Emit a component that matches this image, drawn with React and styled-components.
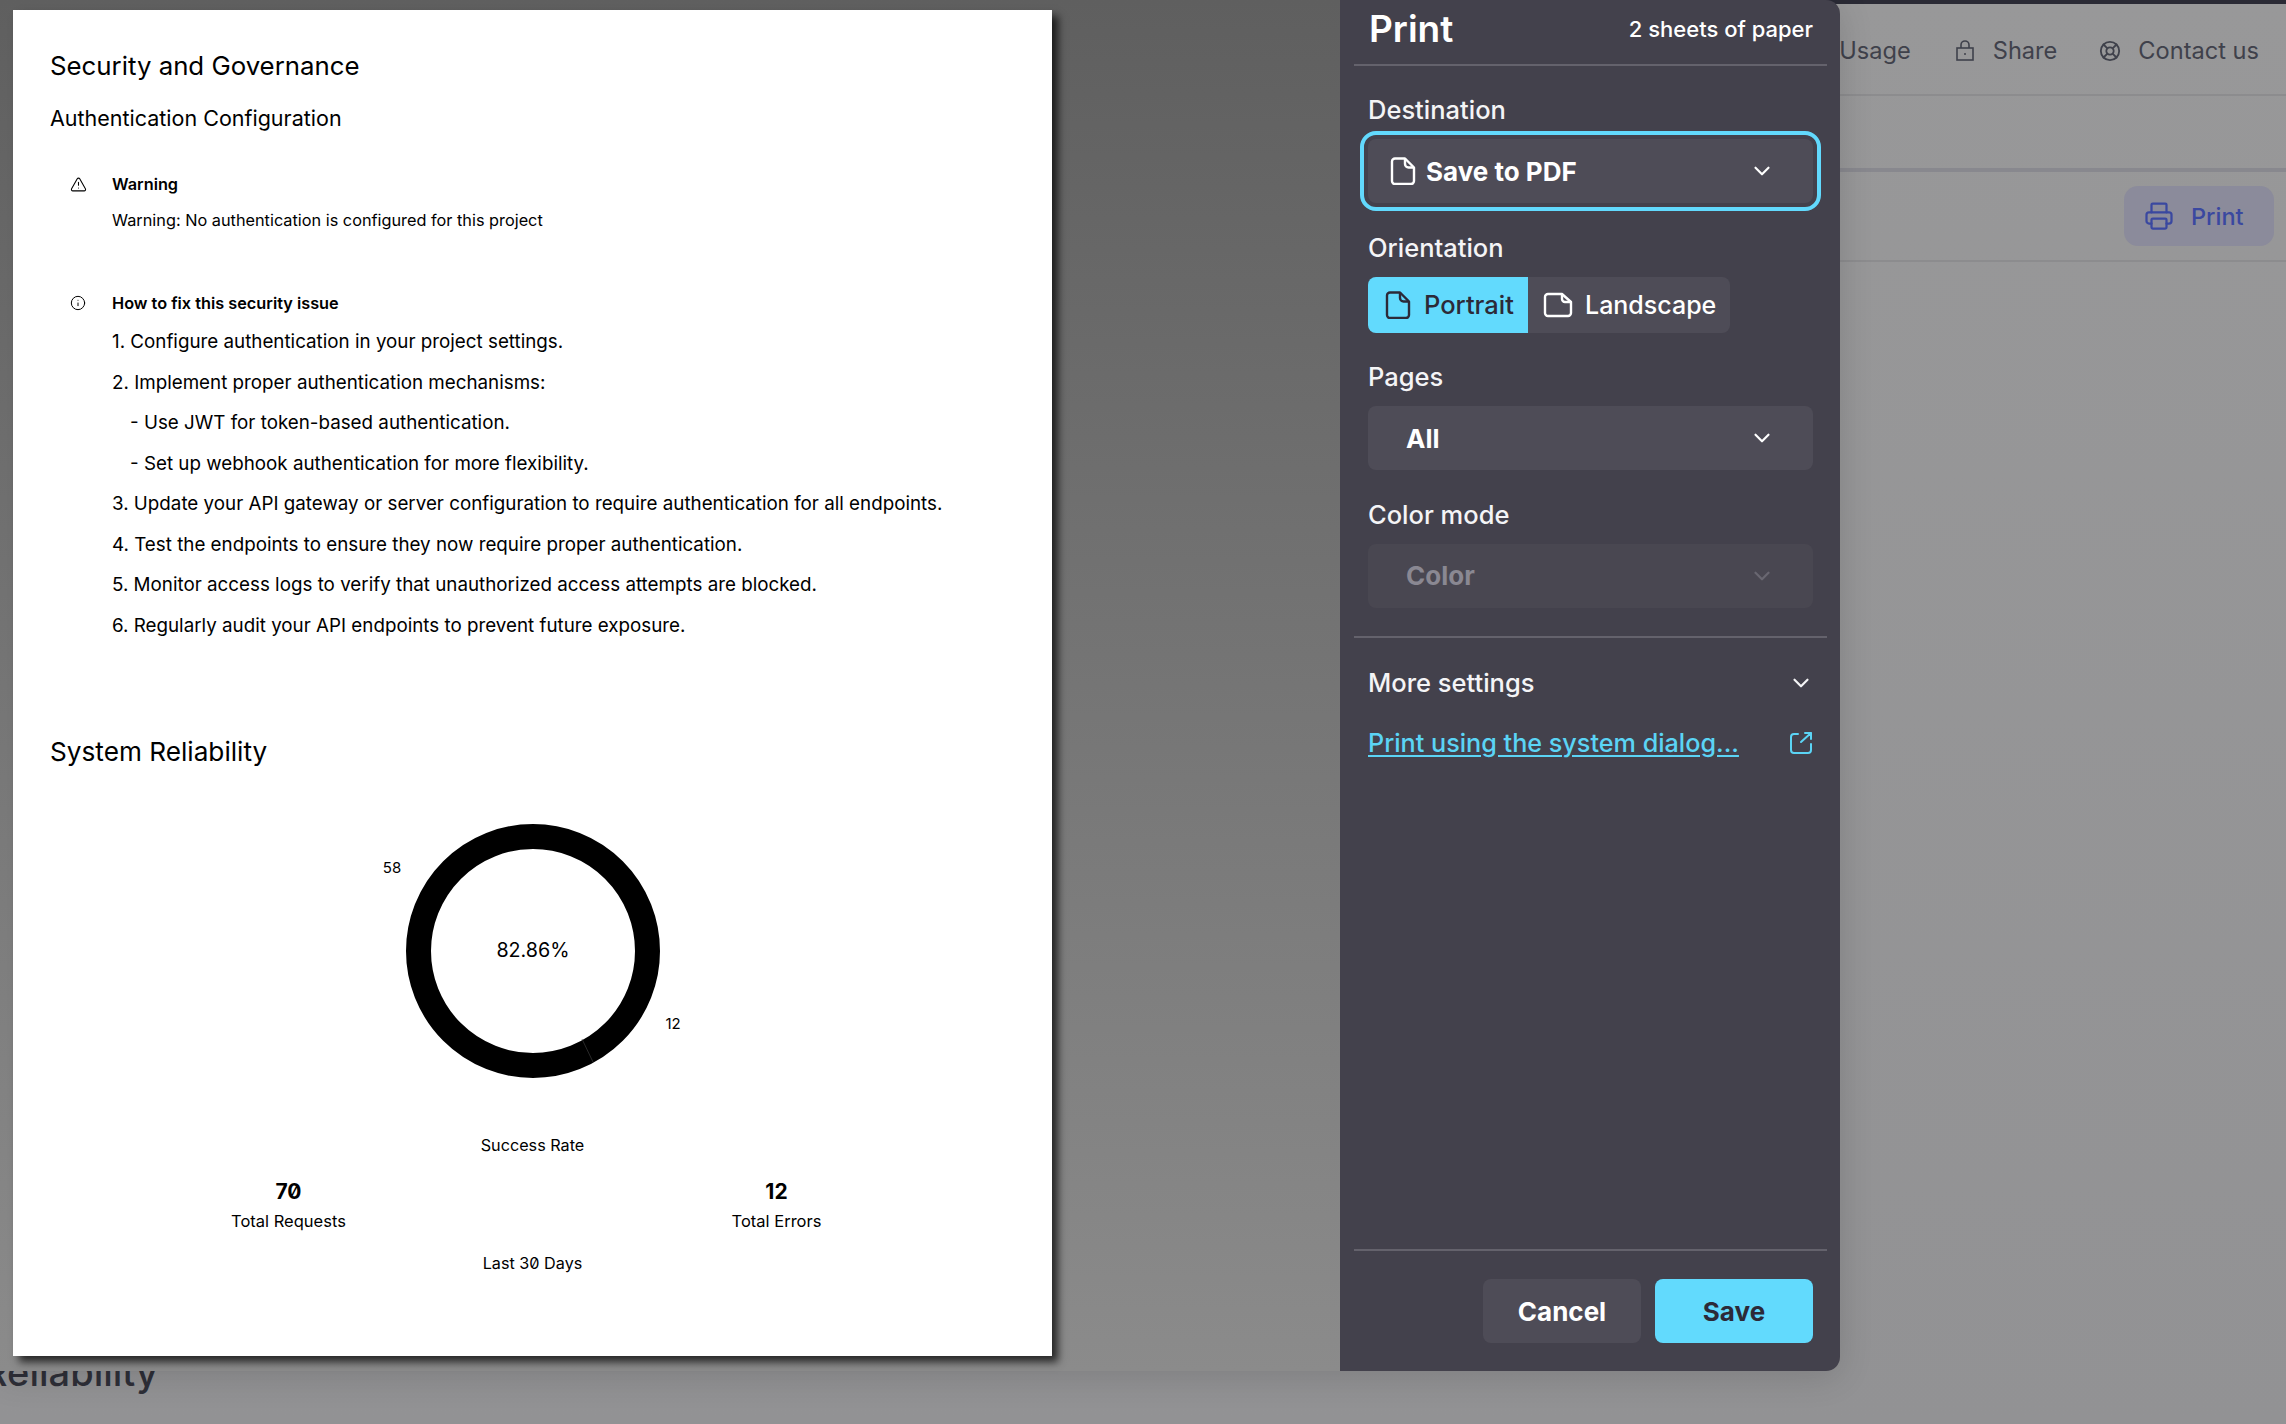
import React from "react";
import styled, { createGlobalStyle } from "styled-components";
import { ChevronDown, LifeBuoy, Printer, TriangleAlert, Info } from "lucide-react";

const Global = createGlobalStyle`
  html, body { margin: 0; padding: 0; overflow: hidden; }
  body { font-family: Inter, "Noto Sans", sans-serif; -webkit-font-smoothing: antialiased; }
`;

const Page = styled.div`
  position: relative; width: 2286px; height: 1424px; overflow: hidden;
  background: linear-gradient(180deg, #989899 0%, #929294 100%);
  display: flex; flex-direction: column; color: #3f414b;
`;
const TopBar = styled.div`height: 4px; background: #2a2a35; flex: none;`;
const Nav = styled.nav`
  height: 86px; flex: none; display: flex; justify-content: flex-end; align-items: center;
  padding: 4px 27px 0 0; border-bottom: 2px solid #8c8c8e; box-sizing: content-box;
`;
const NavItem = styled.span`
  display: inline-flex; align-items: center; gap: ${p => p.$gap || 20}px; font-size: 23.6px; line-height: 30px;
  margin-left: ${p => p.$ml || 0}px;
`;
const SubBar = styled.div`height: 72px; flex: none; border-bottom: 4px solid #88888e;`;
const ActionRow = styled.div`
  height: 88px; flex: none; display: flex; justify-content: flex-end; align-items: center;
  padding-right: 12px; border-bottom: 2px solid #8c8c8e;
`;
const GhostPrint = styled.button`
  width: 150px; height: 60px; border: 0; border-radius: 14px; background: #8b8b9b; color: #3a48a0;
  display: flex; align-items: center; justify-content: flex-start; gap: 17px; font: 500 23.5px Inter, sans-serif; padding: 0 0 0 20px;
`;
const UnderHeading = styled.h2`
  margin: auto 0 29px -17px; font-size: 38px; line-height: 46px; font-weight: 500; color: #2e2f38;
`;

const Overlay = styled.div`
  position: absolute; left: 0; top: 0; width: 1840px; height: 1371px; display: flex;
  box-shadow: 0 6px 34px rgba(0,0,0,.14);
  border-radius: 0 14px 14px 0;
`;
const Preview = styled.div`
  flex: 1; padding: 10px 0 0 13px; box-sizing: border-box;
  background: linear-gradient(180deg, #5f5f5f 0%, #8b8b8b 100%);
`;
const Paper = styled.div`
  width: 1039px; height: 1346px; background: #fff; color: #000; box-sizing: border-box;
  padding: 38px 37px 0; box-shadow: 6px 6px 8px rgba(0,0,0,.72);
  font-feature-settings: "zero" 1;
`;
const H1 = styled.h1`margin: 0; font-size: 25.8px; line-height: 36px; font-weight: 400;`;
const H2 = styled.h2`margin: 19px 0 0; font-size: 21.5px; line-height: 30px; font-weight: 400;`;
const SectionTitle = styled(H1)`margin-top: 96px; font-size: 26.2px;`;
const Alert = styled.section`
  display: grid; grid-template-columns: 42px 1fr; padding-left: 20px; margin-top: ${p => p.$mt}px;
`;
const AlertIcon = styled.div`height: 24px; display: flex; align-items: center;`;
const AlertTitle = styled.div`font-size: 16.3px; line-height: 24px; font-weight: 600;`;
const AlertBody = styled.div`font-size: 16.3px; line-height: 24px; margin-top: 12px;`;
const Steps = styled.ol`
  list-style: none; margin: 15px 0 0; padding: 0; display: flex; flex-direction: column; gap: 16.5px;
`;
const Step = styled.li`font-size: 18.8px; line-height: 24px; padding-left: ${p => p.$indent ? 18 : 0}px; white-space: nowrap;`;
const ChartWrap = styled.div`display: flex; justify-content: center; margin-top: 31px;`;
const ChartLabel = styled.div`text-align: center; font-size: 16.2px; line-height: 22px; margin-top: ${p => p.$mt}px;`;
const Stats = styled.div`display: grid; grid-template-columns: 488px 488px; justify-content: center; margin-top: 21.5px;`;
const Stat = styled.div`text-align: center;`;
const StatValue = styled.div`font-size: 21px; line-height: 28px; font-weight: 700;`;
const StatName = styled.div`font-size: 16.5px; line-height: 20px; margin-top: 5px;`;

const Panel = styled.aside`
  width: 500px; flex: none; box-sizing: border-box; background: #43414c; color: #fff;
  border-radius: 0 14px 14px 0; padding: 0 13px 0 14px; display: flex; flex-direction: column;
`;
const Header = styled.header`
  height: 66px; flex: none; border-bottom: 2px solid #64626c; display: flex; align-items: center;
  justify-content: space-between; padding: 0 14px 6px 15px; box-sizing: border-box;
`;
const Title = styled.h1`margin: 0; font-size: 37px; line-height: 44px; font-weight: 600;`;
const Sheets = styled.span`font-size: 22px; line-height: 28px; font-weight: 500;`;
const Settings = styled.div`display: flex; flex-direction: column; gap: 29.5px; padding: 29px 14px 28.5px; border-bottom: 2px solid #64626c;`;
const Field = styled.div`display: flex; flex-direction: column; gap: 14px;`;
const Label = styled.label`font-size: 25.5px; line-height: 30px; font-weight: 500; color: #f4f4f6;`;
const Select = styled.div`
  height: 64px; box-sizing: border-box; border-radius: 8px; display: flex; align-items: center;
  background: ${p => p.$disabled ? "#494751" : "#4e4c57"}; color: ${p => p.$disabled ? "#8a8892" : "#fff"};
  padding: 0 38px 0 ${p => p.$icon ? 22 : 38}px; gap: 10px; font-size: 26px; font-weight: 700;
  ${p => p.$focus && "outline: 4px solid #62d9fd; outline-offset: 4px;"}
  & > span { flex: 1; }
`;
const Segments = styled.div`display: flex; width: 362px; height: 56px; border-radius: 8px; overflow: hidden; background: #4e4c57;`;
const Segment = styled.div`
  display: flex; align-items: center; font-size: ${p => p.$fs}px; font-weight: 500; box-sizing: border-box;
  width: ${p => p.$w}px; padding-left: ${p => p.$pl}px; gap: ${p => p.$gap}px;
  background: ${p => p.$active ? "#62dafd" : "transparent"}; color: ${p => p.$active ? "#2c2a38" : "#fff"};
`;
const More = styled.div`
  display: flex; align-items: center; justify-content: space-between; padding: 29.5px 13px 0 14px;
  font-size: 25.5px; line-height: 30px; font-weight: 500; color: #f4f4f6;
`;
const LinkRow = styled.div`display: flex; align-items: center; justify-content: space-between; padding: 30px 14px 0 14px; color: #5bd4f5;`;
const SystemLink = styled.a`font-size: 25.2px; line-height: 30px; font-weight: 500; color: #5bd4f5; text-decoration: underline; text-underline-offset: 3px;`;
const Footer = styled.footer`
  margin-top: auto; border-top: 2px solid #64626c; padding: 28px 14px; display: flex; justify-content: flex-end; gap: 14px;
`;
const Action = styled.button`
  width: 158px; height: 64px; border: 0; border-radius: 8px; padding: 0; font: 700 26px Inter, sans-serif;
  background: ${p => p.$primary ? "#62dafd" : "#4e4c57"}; color: ${p => p.$primary ? "#2c2a38" : "#fff"};
`;

const DocIcon = ({ size = 28, landscape }) => landscape ? (
  <svg width="30" height="26" viewBox="0 0 30 26" fill="none" stroke="currentColor" strokeWidth="2.4" strokeLinejoin="round">
    <path d="M5 2h14l9 8v11a3 3 0 0 1-3 3H5a3 3 0 0 1-3-3V5a3 3 0 0 1 3-3z" />
    <path d="M19 2v5a3 3 0 0 0 3 3h6" />
  </svg>
) : (
  <svg width={size - 2} height={size} viewBox="0 0 26 28" fill="none" stroke="currentColor" strokeWidth="2.4" strokeLinejoin="round">
    <path d="M5 1.5h10l9 9V24a3 3 0 0 1-3 3H5a3 3 0 0 1-3-3V4.500a3 3 0 0 1 3-3z" />
    <path d="M15 1.500V7a3.500 3.500 0 0 0 3.500 3.500H24" />
  </svg>
);
const LockIcon = () => (
  <svg width="20" height="22" viewBox="0 0 20 22" fill="none" stroke="currentColor" strokeWidth="1.6">
    <rect x="2" y="8" width="16" height="12" />
    <path d="M6 8V5a4 4 0 0 1 8 0v3" />
    <circle cx="10" cy="14" r="1" fill="currentColor" stroke="none" />
  </svg>
);
const OpenIcon = () => (
  <svg width="24" height="24" viewBox="0 0 24 24" fill="none" stroke="currentColor" strokeWidth="2" strokeLinejoin="round" strokeLinecap="round">
    <path d="M9 3H5a3 3 0 0 0-3 3v13a3 3 0 0 0 3 3h14a3 3 0 0 0 3-3v-6" />
    <path d="M12 11 22 2M16 2h6v6" />
  </svg>
);
const Chev = ({ dim }) => <ChevronDown size={26} strokeWidth={2} opacity={dim ? .5 : 1} />;

const Donut = () => (
  <svg width="400" height="300" viewBox="-200 -150 400 300">
    <circle r="114.500" fill="none" stroke="#000" strokeWidth="25" />
    <line x1="49" y1="88" x2="60" y2="111" stroke="#444" strokeWidth=".6" />
    <text x="0" y="6" textAnchor="middle" fontSize="19.700" fontFamily="Inter, sans-serif">82.86%</text>
    <text x="-141" y="-78" textAnchor="middle" fontSize="15" fontFamily="Inter, sans-serif">58</text>
    <text x="140" y="78" textAnchor="middle" fontSize="15" fontFamily="Inter, sans-serif">12</text>
  </svg>
);

const steps = [
  ["1. Configure authentication in your project settings."],
  ["2. Implement proper authentication mechanisms:"],
  ["- Use JWT for token-based authentication.", true],
  ["- Set up webhook authentication for more flexibility.", true],
  ["3. Update your API gateway or server configuration to require authentication for all endpoints."],
  ["4. Test the endpoints to ensure they now require proper authentication."],
  ["5. Monitor access logs to verify that unauthorized access attempts are blocked."],
  ["6. Regularly audit your API endpoints to prevent future exposure."],
];

export default function App() {
  return (
    <Page>
      <Global />
      <TopBar />
      <Nav>
        <NavItem>Usage</NavItem>
        <NavItem $ml={44} $gap={18}><LockIcon />Share</NavItem>
        <NavItem $ml={42} $gap={17}><LifeBuoy size={22} strokeWidth={2} />Contact us</NavItem>
      </Nav>
      <SubBar />
      <ActionRow>
        <GhostPrint><Printer size={30} strokeWidth={1.8} />Print</GhostPrint>
      </ActionRow>
      <UnderHeading>Reliability</UnderHeading>

      <Overlay>
        <Preview>
          <Paper>
            <H1>Security and Governance</H1>
            <H2>Authentication Configuration</H2>
            <Alert $mt={39}>
              <AlertIcon><TriangleAlert size={17} strokeWidth={1.5} /></AlertIcon>
              <div>
                <AlertTitle>Warning</AlertTitle>
                <AlertBody>Warning: No authentication is configured for this project</AlertBody>
              </div>
            </Alert>
            <Alert $mt={59}>
              <AlertIcon><Info size={16} strokeWidth={1.5} /></AlertIcon>
              <div>
                <AlertTitle>How to fix this security issue</AlertTitle>
                <Steps>
                  {steps.map(([t, indent]) => <Step key={t} $indent={indent}>{t}</Step>)}
                </Steps>
              </div>
            </Alert>
            <SectionTitle>System Reliability</SectionTitle>
            <ChartWrap><Donut /></ChartWrap>
            <ChartLabel $mt={33.5}>Success Rate</ChartLabel>
            <Stats>
              <Stat><StatValue>70</StatValue><StatName>Total Requests</StatName></Stat>
              <Stat><StatValue>12</StatValue><StatName>Total Errors</StatName></Stat>
            </Stats>
            <ChartLabel $mt={21}>Last 30 Days</ChartLabel>
          </Paper>
        </Preview>

        <Panel>
          <Header>
            <Title>Print</Title>
            <Sheets>2 sheets of paper</Sheets>
          </Header>
          <Settings>
            <Field>
              <Label>Destination</Label>
              <Select $focus $icon><DocIcon /><span>Save to PDF</span><Chev /></Select>
            </Field>
            <Field>
              <Label>Orientation</Label>
              <Segments>
                <Segment $active $w={160} $pl={17} $gap={13} $fs={25.5}><DocIcon />Portrait</Segment>
                <Segment $w={202} $pl={15} $gap={12} $fs={25}><DocIcon landscape />Landscape</Segment>
              </Segments>
            </Field>
            <Field>
              <Label>Pages</Label>
              <Select><span>All</span><Chev /></Select>
            </Field>
            <Field>
              <Label>Color mode</Label>
              <Select $disabled><span>Color</span><Chev dim /></Select>
            </Field>
          </Settings>
          <More>More settings<Chev /></More>
          <LinkRow>
            <SystemLink>Print using the system dialog...</SystemLink>
            <OpenIcon />
          </LinkRow>
          <Footer>
            <Action>Cancel</Action>
            <Action $primary>Save</Action>
          </Footer>
        </Panel>
      </Overlay>
    </Page>
  );
}
